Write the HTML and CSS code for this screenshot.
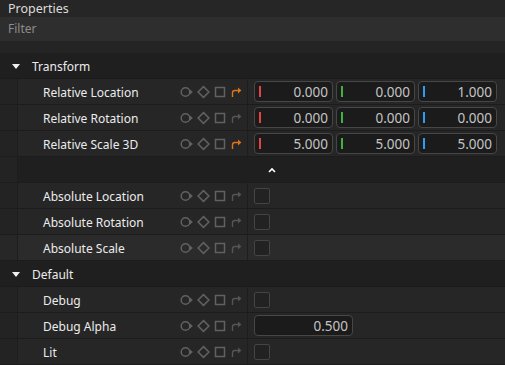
FILE: index.html
```html
<!DOCTYPE html>
<html lang="en">
  <head>
    <meta charset="UTF-8" />
    <title>Properties</title>
    <link rel="stylesheet" href="styles.css">
  </head>
  <body>
    <div class="panel">
      <div class="title">Properties</div>
      <div class="filter">Filter</div>
      <div class="gap"></div>

      <!-- Transform -->
      <div class="group">
        <span class="tri"></span>
        <span>Transform</span>
      </div>

      <div class="row">
        <div class="indent"></div>
        <div class="name">
          <span class="label">Relative Location</span>
          <svg class="icons" width="64" height="14" viewBox="0 0 64 14">
            <use href="#icons-base" />
            <use href="#reset" class="on" />
          </svg>
        </div>
        <div class="value">
          <div class="num"><i class="x"></i>0.000</div>
          <div class="num"><i class="y"></i>0.000</div>
          <div class="num"><i class="z"></i>1.000</div>
        </div>
      </div>

      <div class="row">
        <div class="indent"></div>
        <div class="name">
          <span class="label">Relative Rotation</span>
          <svg class="icons" width="64" height="14" viewBox="0 0 64 14">
            <use href="#icons-base" />
            <use href="#reset" />
          </svg>
        </div>
        <div class="value">
          <div class="num"><i class="x"></i>0.000</div>
          <div class="num"><i class="y"></i>0.000</div>
          <div class="num"><i class="z"></i>0.000</div>
        </div>
      </div>

      <div class="row">
        <div class="indent"></div>
        <div class="name">
          <span class="label">Relative Scale 3D</span>
          <svg class="icons" width="64" height="14" viewBox="0 0 64 14">
            <use href="#icons-base" />
            <use href="#reset" class="on" />
          </svg>
        </div>
        <div class="value">
          <div class="num"><i class="x"></i>5.000</div>
          <div class="num"><i class="y"></i>5.000</div>
          <div class="num"><i class="z"></i>5.000</div>
        </div>
      </div>

      <div class="row expander">
        <div class="indent"></div>
        <div class="more">
          <svg width="8" height="6" viewBox="0 0 8 6"><path d="M1 5 L4 2 L7 5" fill="none" stroke="#fff" stroke-width="1.6" /></svg>
        </div>
      </div>

      <div class="row">
        <div class="indent"></div>
        <div class="name">
          <span class="label">Absolute Location</span>
          <svg class="icons" width="64" height="14" viewBox="0 0 64 14">
            <use href="#icons-base" />
            <use href="#reset" />
          </svg>
        </div>
        <div class="value"><div class="check"></div></div>
      </div>

      <div class="row">
        <div class="indent"></div>
        <div class="name">
          <span class="label">Absolute Rotation</span>
          <svg class="icons" width="64" height="14" viewBox="0 0 64 14">
            <use href="#icons-base" />
            <use href="#reset" />
          </svg>
        </div>
        <div class="value"><div class="check"></div></div>
      </div>

      <div class="row hover">
        <div class="indent"></div>
        <div class="name">
          <span class="label">Absolute Scale</span>
          <svg class="icons" width="64" height="14" viewBox="0 0 64 14">
            <use href="#icons-base" />
            <use href="#reset" />
          </svg>
        </div>
        <div class="value"><div class="check"></div></div>
      </div>

      <!-- Default -->
      <div class="group">
        <span class="tri"></span>
        <span>Default</span>
      </div>

      <div class="row">
        <div class="indent"></div>
        <div class="name">
          <span class="label">Debug</span>
          <svg class="icons" width="64" height="14" viewBox="0 0 64 14">
            <use href="#icons-base" />
            <use href="#reset" />
          </svg>
        </div>
        <div class="value"><div class="check"></div></div>
      </div>

      <div class="row">
        <div class="indent"></div>
        <div class="name">
          <span class="label">Debug Alpha</span>
          <svg class="icons" width="64" height="14" viewBox="0 0 64 14">
            <use href="#icons-base" />
            <use href="#reset" />
          </svg>
        </div>
        <div class="value"><div class="num wide">0.500</div></div>
      </div>

      <div class="row">
        <div class="indent"></div>
        <div class="name">
          <span class="label">Lit</span>
          <svg class="icons" width="64" height="14" viewBox="0 0 64 14">
            <use href="#icons-base" />
            <use href="#reset" />
          </svg>
        </div>
        <div class="value"><div class="check"></div></div>
      </div>
    </div>

    <!-- shared icon shapes -->
    <svg width="0" height="0" class="defs">
      <defs>
        <g id="icons-base" fill="none" stroke="#616161" stroke-width="1.5">
          <circle cx="6.5" cy="7" r="4.3" />
          <path d="M11 4.6 L13.8 7 L11 9.4 Z" fill="#616161" stroke="none" />
          <path d="M24.5 1.6 L29.9 7 L24.5 12.4 L19.1 7 Z" />
          <rect x="36.5" y="2.5" width="9" height="9" />
        </g>
        <g id="reset">
          <path d="M53.5 12 L53.5 7.8 Q53.5 5.5 55.8 5.5 L60 5.5" fill="none" stroke="currentColor" stroke-width="1.4" />
          <path d="M59 2.6 L62.4 5.5 L59 8.4 Z" fill="currentColor" />
        </g>
      </defs>
    </svg>
  </body>
</html>
```

FILE: styles.css
```css
* {
  margin: 0;
  padding: 0;
  box-sizing: border-box;
}
body {
  width: 505px;
  height: 365px;
  overflow: hidden;
  background-color: #232323;
  font-family: "Noto Sans", "Liberation Sans", sans-serif;
  font-size: 12px;
  color: #ececec;
}
.defs {
  position: absolute;
}
.title {
  height: 17px;
  padding-left: 8px;
  line-height: 17px;
  font-size: 12.5px;
  background-color: #262626;
  color: #dcdcdc;
}
.filter {
  height: 24px;
  padding-left: 8px;
  line-height: 24px;
  background-color: #2e2e2e;
  color: #8c8c8c;
}
.gap {
  height: 12px;
  background-color: #242424;
}
/* ===分組標題=== */
.group {
  height: 26px;
  display: flex;
  align-items: center;
  gap: 12px;
  padding-left: 12px;
  padding-top: 1px;
  background-color: #1f1f1f;
  border-bottom: 1px solid #1b1b1b;
  color: #ececec;
}
.tri {
  width: 0;
  height: 0;
  border-left: 4.5px solid transparent;
  border-right: 4.5px solid transparent;
  border-top: 5px solid #f0f0f0;
}
/* ===屬性列=== */
.row {
  height: 26px;
  display: flex;
  border-bottom: 1px solid #1c1c1c;
  background-color: #262626;
}
.indent {
  width: 18px;
  flex-shrink: 0;
  background-color: #232323;
  border-right: 1px solid #1d1d1d;
}
.name {
  width: 230px;
  flex-shrink: 0;
  display: flex;
  align-items: center;
  padding-left: 25px;
  padding-right: 4px;
  padding-top: 1px;
  border-right: 1px solid #1e1e1e;
}
.label {
  flex: 1;
}
.icons {
  color: #555;
}
.icons use.on {
  color: #d9761d;
}
.value {
  flex: 1;
  display: flex;
  align-items: center;
  gap: 3px;
  padding-left: 6px;
}
.num {
  position: relative;
  width: 79px;
  height: 21px;
  line-height: 20px;
  padding-right: 4px;
  text-align: right;
  font-size: 13.5px;
  color: #c4c4c4;
  background-color: #1b1b1b;
  border: 1px solid #474747;
  border-radius: 4px;
}
.num i {
  position: absolute;
  left: 4px;
  top: 4px;
  width: 2px;
  height: 11px;
}
.num .x {
  background-color: #e04444;
}
.num .y {
  background-color: #3fb23f;
}
.num .z {
  background-color: #2e9cf0;
}
.num.wide {
  width: 99px;
}
.check {
  width: 16px;
  height: 16px;
  background-color: #222;
  border: 1px solid #444;
  border-radius: 2px;
}
.expander {
  background-color: #1f1f1f;
}
.more {
  flex: 1;
  display: flex;
  align-items: center;
  padding-left: 250px;
}
.hover {
  background-color: #2b2b2b;
}
.hover .indent {
  background-color: #272727;
}
```
